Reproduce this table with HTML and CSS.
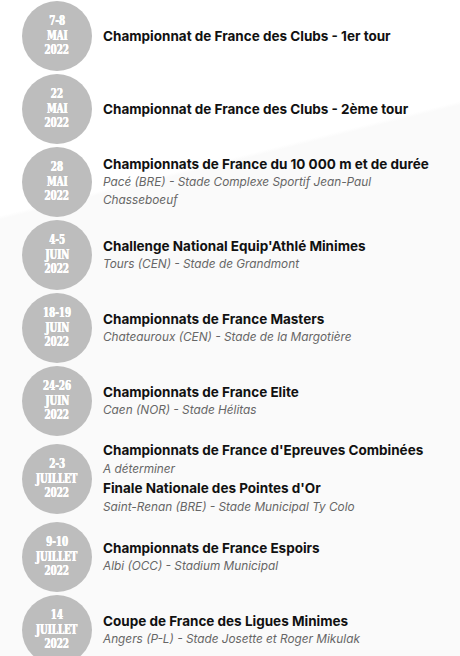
FILE: index.html
```html
<!DOCTYPE html>
<html lang="fr">
<head>
<meta charset="utf-8">
<link rel="stylesheet" href="styles.css">
</head>
<body>
<ul class="events">
  <li class="event">
    <div class="date"><span>7-8</span><span>MAI</span><span>2022</span></div>
    <div class="info">
      <div class="title">Championnat de France des Clubs - 1er tour</div>
    </div>
  </li>
  <li class="event">
    <div class="date"><span>22</span><span>MAI</span><span>2022</span></div>
    <div class="info">
      <div class="title">Championnat de France des Clubs - 2ème tour</div>
    </div>
  </li>
  <li class="event">
    <div class="date"><span>28</span><span>MAI</span><span>2022</span></div>
    <div class="info">
      <div class="title">Championnats de France du 10 000 m et de durée</div>
      <div class="place">Pacé (BRE) - Stade Complexe Sportif Jean-Paul Chasseboeuf</div>
    </div>
  </li>
  <li class="event">
    <div class="date"><span>4-5</span><span>JUIN</span><span>2022</span></div>
    <div class="info">
      <div class="title">Challenge National Equip'Athlé Minimes</div>
      <div class="place">Tours (CEN) - Stade de Grandmont</div>
    </div>
  </li>
  <li class="event">
    <div class="date"><span>18-19</span><span>JUIN</span><span>2022</span></div>
    <div class="info">
      <div class="title">Championnats de France Masters</div>
      <div class="place">Chateauroux (CEN) - Stade de la Margotière</div>
    </div>
  </li>
  <li class="event">
    <div class="date"><span>24-26</span><span>JUIN</span><span>2022</span></div>
    <div class="info">
      <div class="title">Championnats de France Elite</div>
      <div class="place">Caen (NOR) - Stade Hélitas</div>
    </div>
  </li>
  <li class="event">
    <div class="date"><span>2-3</span><span>JUILLET</span><span>2022</span></div>
    <div class="info tall">
      <div class="title">Championnats de France d'Epreuves Combinées</div>
      <div class="place">A déterminer</div>
      <div class="title">Finale Nationale des Pointes d'Or</div>
      <div class="place">Saint-Renan (BRE) - Stade Municipal Ty Colo</div>
    </div>
  </li>
  <li class="event">
    <div class="date"><span>9-10</span><span>JUILLET</span><span>2022</span></div>
    <div class="info">
      <div class="title">Championnats de France Espoirs</div>
      <div class="place">Albi (OCC) - Stadium Municipal</div>
    </div>
  </li>
  <li class="event">
    <div class="date"><span>14</span><span>JUILLET</span><span>2022</span></div>
    <div class="info">
      <div class="title">Coupe de France des Ligues Minimes</div>
      <div class="place">Angers (P-L) - Stade Josette et Roger Mikulak</div>
    </div>
  </li>
</ul>
</body>
</html>
```

FILE: styles.css
```css
html, body {
  margin: 0;
  padding: 0;
}
body {
  width: 460px;
  height: 656px;
  overflow: hidden;
  background:
    linear-gradient(166deg, #ffffff 0 28%, #fafafa 28.5% 100%);
  font-family: "Inter", "Liberation Sans", sans-serif;
}
.events {
  list-style: none;
  margin: 0;
  padding: 1px 22px 0 22px;
  display: flex;
  flex-direction: column;
  gap: 3px;
}
.event {
  display: flex;
  align-items: center;
  gap: 11px;
  min-height: 70px;
}
.date {
  flex: 0 0 70px;
  width: 70px;
  height: 70px;
  border-radius: 50%;
  background: #bdbdbd;
  color: #fff;
  display: flex;
  flex-direction: column;
  align-items: center;
  justify-content: center;
  font-family: "DejaVu Serif Condensed", "DejaVu Serif", serif;
  font-weight: bold;
  font-size: 12.5px;
  line-height: 14.6px;
}
.date span {
  display: block;
  transform: scaleX(0.78);
  text-shadow: 0.4px 0 0 #fff, -0.2px 0 0 #fff;
}
.info {
  display: flex;
  flex-direction: column;
  min-width: 0;
}
.info.tall {
  padding: 2px 0;
}
.tall .place {
  line-height: 19px;
}
.title {
  font-weight: bold;
  font-size: 13.5px;
  line-height: 19px;
  color: #111;
}
.place {
  font-style: italic;
  font-size: 11.8px;
  line-height: 17.5px;
  color: #666;
}
```
